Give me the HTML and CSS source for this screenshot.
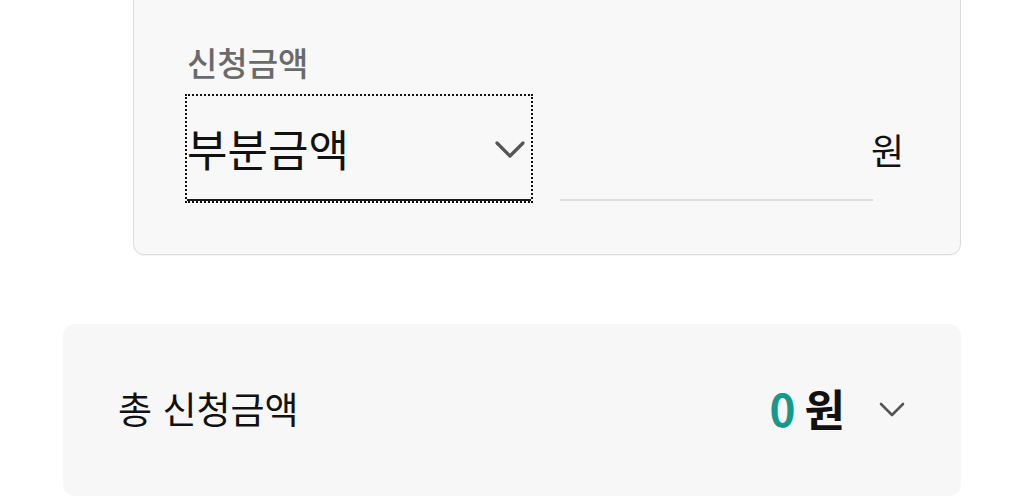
FILE: index.html
```html
<!DOCTYPE html>
<html lang="ko">
<head>
<meta charset="utf-8">
<title>신청금액</title>
<link rel="stylesheet" href="styles.css">
</head>
<body>
<div class="page">
  <section class="form-card">
    <div class="field-label">신청금액</div>
    <div class="amount-row">
      <div class="select-focus">
        <div class="select-box" tabindex="0">
          <span class="select-value">부분금액</span>
          <svg class="chev-lg" width="30" height="19" viewBox="0 0 30 19" aria-hidden="true">
            <polyline points="2,3 15,16 28,3" fill="none" stroke="#555" stroke-width="3.2" stroke-linecap="round" stroke-linejoin="round"/>
          </svg>
        </div>
      </div>
      <div class="input-wrap"><input class="amount-input" type="text" value="" aria-label="금액"></div>
      <span class="unit">원</span>
    </div>
  </section>
  <section class="summary-card">
    <div class="summary-label">총 신청금액</div>
    <div class="summary-right">
      <span class="sum-value"><span class="sum-num">0</span>원</span>
      <svg class="chev-sm" width="26" height="16" viewBox="0 0 26 16" aria-hidden="true">
        <polyline points="2,2 13,13 24,2" fill="none" stroke="#555" stroke-width="2.6" stroke-linecap="round" stroke-linejoin="round"/>
      </svg>
    </div>
  </section>
</div>
</body>
</html>
```
FILE: styles.css
```css
html, body {
  margin: 0;
  padding: 0;
  background: #ffffff;
}
body {
  font-family: "Noto Sans CJK KR", "Noto Sans", sans-serif;
  color: #111;
  width: 1025px;
  height: 498px;
  overflow: hidden;
}
.page {
  display: flex;
  flex-direction: column;
}
.form-card {
  margin: -20px 0 0 133px;
  width: 828px;
  box-sizing: border-box;
  background: #f8f8f8;
  border: 1px solid #dcdcdc;
  border-radius: 11px;
  padding: 61px 55px 51px 51px;
  box-shadow: 0 1px 1px rgba(0,0,0,0.04);
}
.field-label {
  font-size: 33px;
  line-height: 40px;
  font-weight: 500;
  color: #6a6a6a;
  padding-left: 2px;
}
.amount-row {
  display: flex;
  align-items: center;
  margin-top: 12px;
}
.select-focus {
  flex: none;
  border: 2px dotted #111;
}
.select-box {
  width: 344px;
  height: 105px;
  box-sizing: border-box;
  border-bottom: 2px solid #1a1a1a;
  display: flex;
  align-items: center;
  justify-content: space-between;
  padding: 0 6px 0 0;
}
.select-value {
  font-size: 44px;
  line-height: 52px;
  color: #111;
}
.chev-lg {
  display: block;
  margin-top: 4px;
}
.input-wrap {
  flex: none;
  margin-left: 27px;
  width: 313px;
  align-self: stretch;
  display: flex;
  align-items: flex-end;
  padding-bottom: 2px;
}
.amount-input {
  width: 100%;
  box-sizing: border-box;
  height: 40px;
  border: 0;
  border-bottom: 2px solid #dedede;
  background: transparent;
  padding: 0;
  font: inherit;
  outline: none;
}
.unit {
  font-size: 36px;
  line-height: 44px;
  color: #111;
  margin-left: -2px;
}
.summary-card {
  margin: 69px 0 0 63px;
  width: 898px;
  height: 172px;
  box-sizing: border-box;
  background: #f7f7f7;
  border-radius: 12px;
  padding: 0 56px 4px 55px;
  display: flex;
  align-items: center;
  justify-content: space-between;
}
.summary-label {
  font-size: 37px;
  line-height: 44px;
  color: #111;
}
.summary-right {
  display: flex;
  align-items: center;
}
.sum-value {
  font-size: 44px;
  line-height: 52px;
  font-weight: 700;
  color: #111;
}
.sum-num {
  color: #16988a;
  margin-right: 9px;
}
.chev-sm {
  display: block;
  margin-left: 34px;
  margin-top: 4px;
}
```
